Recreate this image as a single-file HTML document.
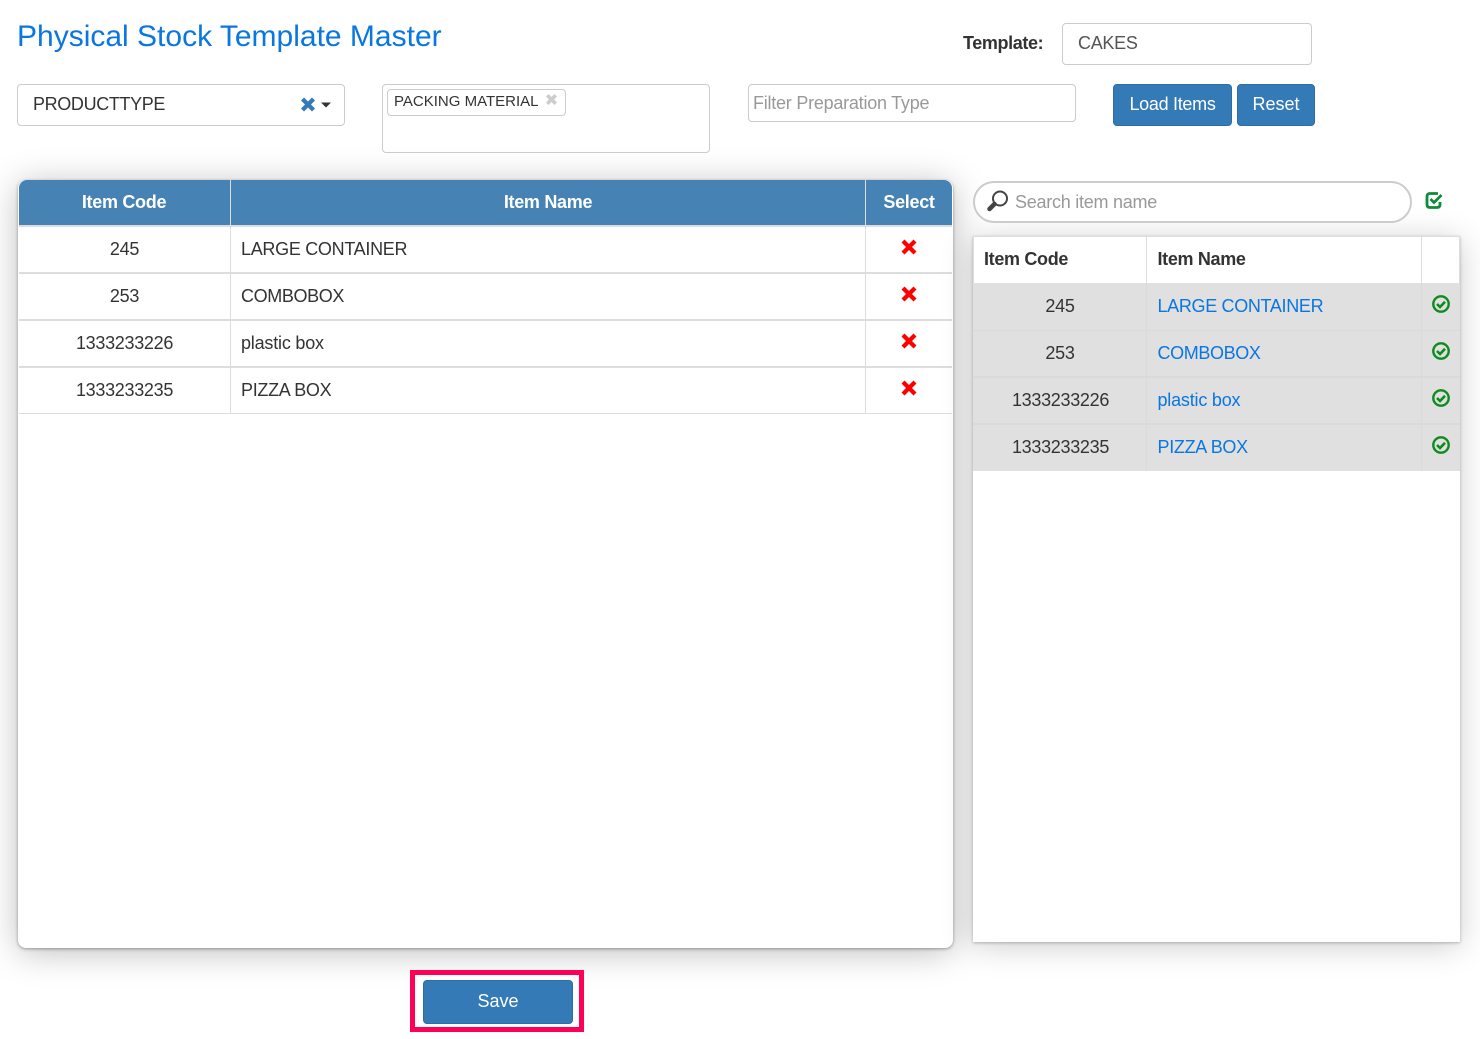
<!DOCTYPE html>
<html><head><meta charset="utf-8"><title>Physical Stock Template Master</title>
<style>
html,body{margin:0;padding:0;background:#fff;width:1480px;height:1039px;overflow:hidden}
body{position:relative;font-family:"Liberation Sans",Arial,sans-serif;font-size:18px;color:#333;letter-spacing:-.3px}
.a{position:absolute;box-sizing:border-box}
.t{position:absolute;white-space:nowrap;line-height:20px}
.inp{background:#fff;border:1px solid #ccc;border-radius:4px}
.btn{background:#337ab7;border:1px solid #2e6da4;border-radius:4px;color:#fff;text-align:center}
.c{transform:translateX(-50%)}
.b{font-weight:bold}
.l{color:#0a76e0}
svg{position:absolute;display:block}
</style></head><body>

<div class="t" style="left:17px;top:18px;font-size:30px;line-height:38px;color:#0a76e0;letter-spacing:0">Physical Stock Template Master</div>

<div class="t b" style="left:963px;top:33px;letter-spacing:-.38px">Template:</div>
<div class="a inp" style="left:1062px;top:23px;width:250px;height:42px"></div>
<div class="t" style="left:1078px;top:33px;color:#555">CAKES</div>

<div class="a inp" style="left:17px;top:84px;width:328px;height:42px"></div>
<div class="t" style="left:33px;top:94px;letter-spacing:-.36px">PRODUCTTYPE</div>
<svg style="left:300px;top:96px" width="16" height="16" viewBox="0 0 16 16"><path d="M4 1.500L8 5.500 12 1.500 15 4.500 11 8.500 15 12.500 12 15.500 8 11.500 4 15.500 1 12.500 5 8.500 1 4.500Z" fill="#337ab7"/></svg>
<svg style="left:320px;top:102px" width="12" height="6" viewBox="0 0 12 6"><path d="M1 0.500H11L6 5.500Z" fill="#333"/></svg>

<div class="a inp" style="left:382px;top:84px;width:328px;height:69px"></div>
<div class="a" style="left:387px;top:89px;width:179px;height:27px;border:1px solid #ccc;border-radius:4px"></div>
<div class="t" style="left:394px;top:92px;font-size:15px;letter-spacing:0">PACKING MATERIAL</div>
<svg style="left:545px;top:93px" width="13" height="13" viewBox="0 0 13 13"><path d="M3.500 1L6.500 4 9.500 1 12 3.500 9 6.500 12 9.500 9.500 12 6.500 9 3.500 12 1 9.500 4 6.500 1 3.500Z" fill="#ccc"/></svg>

<div class="a inp" style="left:748px;top:84px;width:328px;height:38px"></div>
<div class="t" style="left:753px;top:93px;color:#999;letter-spacing:-.24px">Filter Preparation Type</div>

<div class="a btn" style="left:1113px;top:84px;width:119px;height:42px;line-height:39px">Load Items</div>
<div class="a btn" style="left:1237px;top:84px;width:78px;height:42px;line-height:39px;letter-spacing:0">Reset</div>

<!-- left card -->
<div class="a" style="left:18px;top:180px;width:935px;height:768px;background:#fff;border-radius:8px;box-shadow:0 1px 3px rgba(0,0,0,.35),0 4px 34px rgba(0,0,0,.26)"></div>
<div class="a" style="left:19px;top:180px;width:933px;height:45px;background:#4682b4;border-radius:8px 8px 0 0"></div>
<div class="a" style="left:230px;top:180px;width:1px;height:234px;background:#ddd"></div>
<div class="a" style="left:865px;top:180px;width:1px;height:234px;background:#ddd"></div>
<div class="a" style="left:19px;top:225px;width:933px;height:2px;background:#ddd"></div>
<div class="a" style="left:19px;top:272px;width:933px;height:2px;background:#ddd"></div>
<div class="a" style="left:19px;top:319px;width:933px;height:2px;background:#ddd"></div>
<div class="a" style="left:19px;top:366px;width:933px;height:2px;background:#ddd"></div>
<div class="a" style="left:19px;top:413px;width:933px;height:1px;background:#ddd"></div>

<div class="t b c" style="left:124px;top:192px;color:#fff">Item Code</div>
<div class="t b c" style="left:548px;top:192px;color:#fff">Item Name</div>
<div class="t b c" style="left:909px;top:192px;color:#fff">Select</div>

<div class="t c" style="left:124.500px;top:239px">245</div><div class="t" style="left:241px;top:239px">LARGE CONTAINER</div>
<div class="t c" style="left:124.500px;top:286px">253</div><div class="t" style="left:241px;top:286px;letter-spacing:-.37px">COMBOBOX</div>
<div class="t c" style="left:124.500px;top:333px">1333233226</div><div class="t" style="left:241px;top:333px;letter-spacing:-.2px">plastic box</div>
<div class="t c" style="left:124.500px;top:380px">1333233235</div><div class="t" style="left:241px;top:380px">PIZZA BOX</div>

<svg style="left:900px;top:238px" width="18" height="18" viewBox="0 0 18 18"><path d="M4.500 1.500L9 6 13.500 1.500 16.500 4.500 12 9 16.500 13.500 13.500 16.500 9 12 4.500 16.500 1.500 13.500 6 9 1.500 4.500Z" fill="#f00"/></svg>
<svg style="left:900px;top:285px" width="18" height="18" viewBox="0 0 18 18"><path d="M4.500 1.500L9 6 13.500 1.500 16.500 4.500 12 9 16.500 13.500 13.500 16.500 9 12 4.500 16.500 1.500 13.500 6 9 1.500 4.500Z" fill="#f00"/></svg>
<svg style="left:900px;top:332px" width="18" height="18" viewBox="0 0 18 18"><path d="M4.500 1.500L9 6 13.500 1.500 16.500 4.500 12 9 16.500 13.500 13.500 16.500 9 12 4.500 16.500 1.500 13.500 6 9 1.500 4.500Z" fill="#f00"/></svg>
<svg style="left:900px;top:379px" width="18" height="18" viewBox="0 0 18 18"><path d="M4.500 1.500L9 6 13.500 1.500 16.500 4.500 12 9 16.500 13.500 13.500 16.500 9 12 4.500 16.500 1.500 13.500 6 9 1.500 4.500Z" fill="#f00"/></svg>

<!-- right card -->
<div class="a" style="left:973px;top:236px;width:487px;height:706px;background:#fff;box-shadow:0 1px 3px rgba(0,0,0,.25),0 4px 30px rgba(0,0,0,.2)"></div>
<div class="a" style="left:973px;top:236px;width:487px;height:47px;background:#fff;border:1px solid #ddd;border-bottom:0"></div>
<div class="a" style="left:1146px;top:236px;width:1px;height:47px;background:#ddd"></div>
<div class="a" style="left:1421px;top:236px;width:1px;height:47px;background:#ddd"></div>
<div class="a" style="left:973px;top:283px;width:487px;height:188px;background:#e0e0e0"></div>
<div class="a" style="left:1146px;top:283px;width:1px;height:188px;background:#dadada"></div>
<div class="a" style="left:1421px;top:283px;width:1px;height:188px;background:#dadada"></div>
<div class="a" style="left:973px;top:330px;width:487px;height:1px;background:#dadada"></div>
<div class="a" style="left:973px;top:376px;width:487px;height:2px;background:#dadada"></div>
<div class="a" style="left:973px;top:423px;width:487px;height:2px;background:#dadada"></div>

<!-- search: after the right card so the card shadow stays underneath -->
<div class="a" style="left:973px;top:181px;width:439px;height:42px;background:#fff;border:2px solid #ccc;border-radius:21px"></div>
<svg style="left:986px;top:190px" width="24" height="24" viewBox="0 0 24 24"><circle cx="14" cy="8.500" r="7" fill="none" stroke="#444" stroke-width="2"/><path d="M8.500 14L3.500 19" stroke="#444" stroke-width="4.500" stroke-linecap="round"/></svg>
<div class="t" style="left:1015px;top:192px;color:#999;letter-spacing:-.25px">Search item name</div>
<svg style="left:1425px;top:191px" width="19" height="19" viewBox="0 0 19 19"><path d="M13 2.500H5Q2 2.500 2 5.500V13.500Q2 16.500 5 16.500H12Q15 16.500 15 13.500V11" fill="none" stroke="#0f8a3c" stroke-width="2.800"/><path d="M5.500 8L9 11.500 16.500 4" fill="none" stroke="#0f8a3c" stroke-width="2.800"/></svg>

<div class="t b" style="left:984px;top:249px;letter-spacing:-.33px">Item Code</div>
<div class="t b" style="left:1157.500px;top:249px;letter-spacing:-.33px">Item Name</div>

<div class="t c" style="left:1060px;top:296px">245</div><div class="t l" style="left:1157.500px;top:296px;letter-spacing:-.33px">LARGE CONTAINER</div>
<div class="t c" style="left:1060px;top:343px">253</div><div class="t l" style="left:1157.500px;top:343px;letter-spacing:-.37px">COMBOBOX</div>
<div class="t c" style="left:1060.500px;top:390px">1333233226</div><div class="t l" style="left:1157.500px;top:390px;letter-spacing:-.2px">plastic box</div>
<div class="t c" style="left:1060.500px;top:437px">1333233235</div><div class="t l" style="left:1157.500px;top:437px">PIZZA BOX</div>

<svg style="left:1431px;top:294px" width="20" height="20" viewBox="0 0 20 20"><circle cx="10" cy="10" r="7.700" fill="none" stroke="#0f8a1f" stroke-width="2.400"/><path d="M6 10L9 13 14 7.800" fill="none" stroke="#0f8a1f" stroke-width="2.600"/></svg>
<svg style="left:1431px;top:341px" width="20" height="20" viewBox="0 0 20 20"><circle cx="10" cy="10" r="7.700" fill="none" stroke="#0f8a1f" stroke-width="2.400"/><path d="M6 10L9 13 14 7.800" fill="none" stroke="#0f8a1f" stroke-width="2.600"/></svg>
<svg style="left:1431px;top:388px" width="20" height="20" viewBox="0 0 20 20"><circle cx="10" cy="10" r="7.700" fill="none" stroke="#0f8a1f" stroke-width="2.400"/><path d="M6 10L9 13 14 7.800" fill="none" stroke="#0f8a1f" stroke-width="2.600"/></svg>
<svg style="left:1431px;top:435px" width="20" height="20" viewBox="0 0 20 20"><circle cx="10" cy="10" r="7.700" fill="none" stroke="#0f8a1f" stroke-width="2.400"/><path d="M6 10L9 13 14 7.800" fill="none" stroke="#0f8a1f" stroke-width="2.600"/></svg>

<!-- save -->
<div class="a" style="left:410px;top:970px;width:174px;height:62px;background:#fff;border:5px solid #ff0055"></div>
<div class="a btn" style="left:423px;top:980px;width:150px;height:44px;line-height:40px;letter-spacing:0">Save</div>
</body></html>
